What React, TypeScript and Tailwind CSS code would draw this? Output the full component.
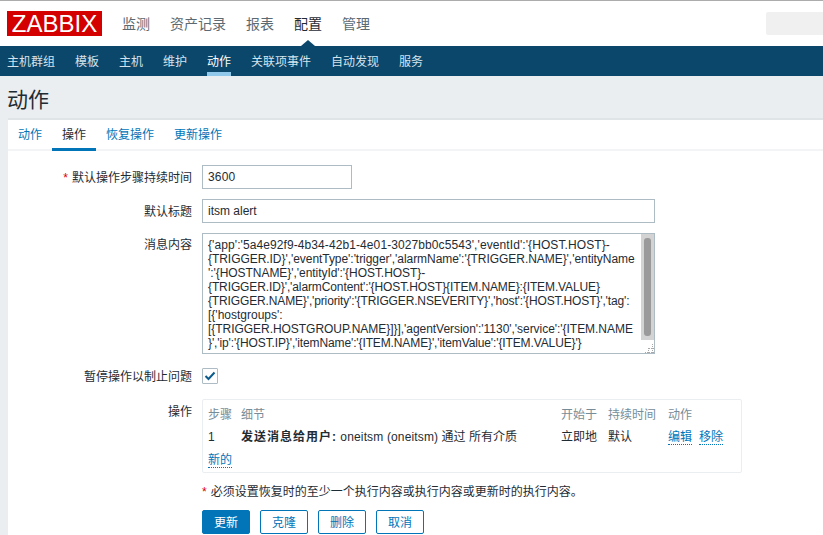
const TOP_NAV = ['监测', '资产记录', '报表', '配置', '管理'];
const SUB_NAV = ['主机群组', '模板', '主机', '维护', '动作', '关联项事件', '自动发现', '服务'];
const TABS = ['动作', '操作', '恢复操作', '更新操作'];

// the wrapped lines of the textarea, tracking nudged per line to land on the same right edge
const MESSAGE = [
  { text: "{'app':'5a4e92f9-4b34-42b1-4e01-3027bb0c5543','eventId':'{HOST.HOST}-", cls: 'tracking-[0.09px]' },
  { text: "{TRIGGER.ID}','eventType':'trigger','alarmName':'{TRIGGER.NAME}','entityName", cls: 'tracking-[-0.05px]' },
  { text: "':'{HOSTNAME}','entityId':'{HOST.HOST}-", cls: 'tracking-[-0.05px]' },
  { text: "{TRIGGER.ID}','alarmContent':'{HOST.HOST}{ITEM.NAME}:{ITEM.VALUE}", cls: 'tracking-[-0.11px]' },
  { text: "{TRIGGER.NAME}','priority':'{TRIGGER.NSEVERITY}','host':'{HOST.HOST}','tag':", cls: 'tracking-[-0.14px]' },
  { text: "[{'hostgroups':", cls: '' },
  { text: "[{TRIGGER.HOSTGROUP.NAME}]}],'agentVersion':'1130','service':'{ITEM.NAME", cls: 'tracking-[-0.04px]' },
  { text: "}','ip':'{HOST.IP}','itemName':'{ITEM.NAME}','itemValue':'{ITEM.VALUE}'}", cls: 'tracking-[-0.12px]' },
];

function Label({ text, required }: { text: string; required?: boolean }) {
  return (
    <div className="w-[192px] shrink-0 text-right leading-[14px] text-[#1f2c33]">
      {required && <span className="mr-1 text-[#dc0000]">*</span>}
      {text}
    </div>
  );
}

function Btn({ text }: { text: string }) {
  return (
    <button className="h-[24px] w-[48px] rounded-[2px] border border-[#0275b8] bg-white pt-[2px] text-[12px] text-[#0275b8]">
      {text}
    </button>
  );
}

export default function App() {
  return (
    <div
      className="flex h-[535px] w-[823px] flex-col overflow-hidden bg-[#ebeef0] text-[12px] text-[#1f2c33]"
      style={{ fontFamily: '"Liberation Sans", "Noto Sans CJK SC", sans-serif' }}
    >
      {/* top bar */}
      <div className="flex h-[46px] shrink-0 items-center border-t border-[#acacac] bg-white pl-[7px]">
        <div className="flex h-[25px] w-[95px] items-center justify-center bg-[#d40000] text-[24px] leading-none text-white">
          ZABBIX
        </div>
        <div className="ml-[20px] flex gap-[20px] pt-[2px] text-[14px]">
          {TOP_NAV.map(n => (
            <span key={n} className={n === '配置' ? 'text-[#1f2c33]' : 'text-[#5b6a72]'}>{n}</span>
          ))}
        </div>
        <div className="ml-auto h-[23px] w-[57px] rounded-l-[2px] bg-[#f0f0f0]"></div>
      </div>

      {/* sub nav */}
      <div className="relative flex h-[30px] shrink-0 gap-[20px] bg-[#0b476b] pl-[7px]">
        <div className="absolute left-[301px] top-[-6px] h-0 w-0 border-x-[7px] border-b-[6px] border-x-transparent border-b-[#0b476b]"></div>
        {SUB_NAV.map(n => (
          <div
            key={n}
            className={`h-[30px] pt-[8px] leading-[16px] ${n === '动作' ? 'border-b-[4px] border-[#8fc8ea] text-white' : 'text-[#d5e3ec]'}`}
          >
            {n}
          </div>
        ))}
      </div>

      {/* title */}
      <div className="flex h-[42px] shrink-0 items-center pl-[7px] pt-[6px] text-[21px] text-[#1f2c33]">动作</div>

      {/* card */}
      <div className="ml-[8px] flex-1 border-t-2 border-[#dfe4e7] bg-white">
        <div className="flex h-[31px] border-b-2 border-[#f2f4f5]">
          {TABS.map(t => (
            <div
              key={t}
              className={`h-[31px] px-[10px] pt-[7px] leading-[16px] ${t === '操作' ? 'border-b-[3px] border-[#0275b8] text-[#1f2c33]' : 'text-[#0275b8]'}`}
            >
              {t}
            </div>
          ))}
        </div>

        <div className="-ml-[8px] flex flex-col pt-[14px]">
          <div className="flex items-center gap-[10px]">
            <div className="pt-[2px]"><Label text="默认操作步骤持续时间" required /></div>
            <div className="flex h-[24px] w-[150px] items-center border border-[#acbbc4] px-[5px] tracking-[0.2px]">3600</div>
          </div>

          <div className="mt-[10px] flex items-center gap-[10px]">
            <div className="pt-[2px]"><Label text="默认标题" /></div>
            <div className="flex h-[24px] w-[453px] items-center border border-[#acbbc4] px-[5px]">itsm alert</div>
          </div>

          <div className="mt-[10px] flex gap-[10px]">
            <div className="pt-[5px]"><Label text="消息内容" /></div>
            <div className="flex h-[121px] w-[453px] border border-[#acbbc4]">
              <div className="min-w-0 flex-1 whitespace-pre px-[5px] pt-[4px] leading-[14px]">
                {MESSAGE.map((line, i) => <div key={i} className={line.cls}>{line.text}</div>)}
              </div>
              <div className="flex w-[13px] shrink-0 flex-col">
                <div className="h-[106px] bg-[#d3d3d3] px-[3px] py-[4px]">
                  <div className="h-full rounded-[3px] bg-[#9a9a9a]"></div>
                </div>
                <div className="flex flex-1 items-end justify-end">
                  <svg width="11" height="11" viewBox="0 0 11 11" stroke="#a8a8a8" strokeDasharray="1 1">
                    <path d="M2 10.5H11M6 6.5H11M9.5 2V11M5.5 6V11" fill="none" />
                  </svg>
                </div>
              </div>
            </div>
          </div>

          <div className="mt-[14px] flex h-[16px] gap-[10px]">
            <div className="pt-[2px]"><Label text="暂停操作以制止问题" /></div>
            <div className="flex h-[16px] w-[16px] items-center justify-center rounded-[1px] border border-[#acbbc4]">
              <svg width="12" height="10" viewBox="0 0 12 10" fill="none" stroke="#0b5c8c" strokeWidth="2">
                <path d="M1.5 5 L4.5 8 L10.5 1.5" />
              </svg>
            </div>
          </div>

          <div className="mt-[15px] flex gap-[10px]">
            <div className="pt-[6px]"><Label text="操作" /></div>
            <div className="h-[74px] w-[540px] rounded-[2px] border border-[#ebeef0] px-[5px] pt-[7px]">
              <div className="flex h-[16px] items-center text-[#768d99]">
                <span className="w-[33px]">步骤</span>
                <span className="w-[320px]">细节</span>
                <span className="w-[47px]">开始于</span>
                <span className="w-[60px]">持续时间</span>
                <span>动作</span>
              </div>
              <div className="mt-[6px] flex h-[16px] items-center">
                <span className="w-[33px]">1</span>
                <span className="w-[320px]">
                  <b className="tracking-[1px]">发送消息给用户:</b> <span className="tracking-[0.15px]">oneitsm (oneitsm)</span> 通过 所有介质
                </span>
                <span className="w-[47px]">立即地</span>
                <span className="w-[60px]">默认</span>
                <span className="border-b border-dotted border-[#0275b8] leading-[14px] text-[#0275b8]">编辑</span>
                <span className="ml-[7px] border-b border-dotted border-[#0275b8] leading-[14px] text-[#0275b8]">移除</span>
              </div>
              <div className="mt-[6px]">
                <span className="inline-block border-b border-dotted border-[#0275b8] leading-[14px] text-[#0275b8]">新的</span>
              </div>
            </div>
          </div>

          <div className="ml-[202px] mt-[12px] leading-[14px]">
            <span className="mr-1 text-[#dc0000]">*</span>必须设置恢复时的至少一个执行内容或执行内容或更新时的执行内容。
          </div>

          <div className="ml-[202px] mt-[11px] flex gap-[10px]">
            <button className="h-[24px] w-[48px] rounded-[2px] border border-[#0275b8] bg-[#0275b8] pt-[2px] text-[12px] text-white">更新</button>
            <Btn text="克隆" />
            <Btn text="删除" />
            <Btn text="取消" />
          </div>
        </div>
      </div>
    </div>
  );
}
